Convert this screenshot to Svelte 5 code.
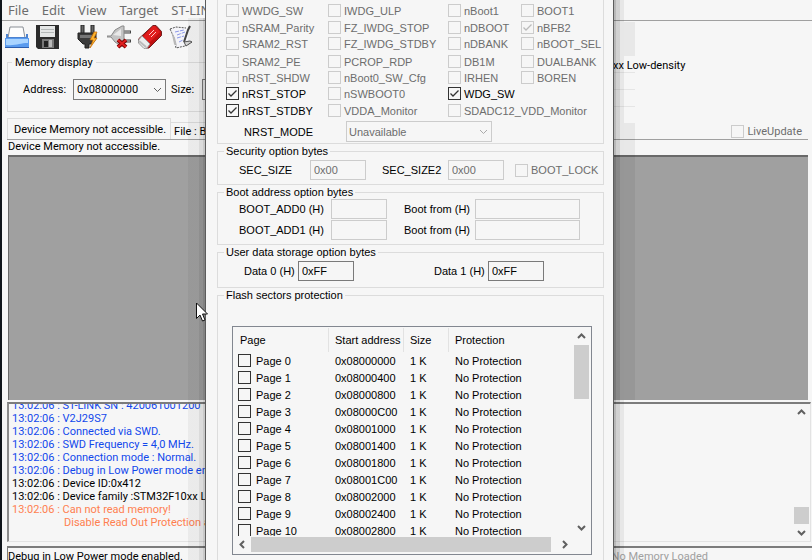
<script lang="ts">
  type Option = { name: string; col: number; row: number; checked?: boolean; enabled?: boolean };

  const menus = ['File', 'Edit', 'View', 'Target', 'ST-LINK'];

  const options: Option[] = [
    { name: 'WWDG_SW', col: 1, row: 1 },
    { name: 'IWDG_ULP', col: 2, row: 1 },
    { name: 'nBoot1', col: 3, row: 1 },
    { name: 'BOOT1', col: 4, row: 1 },
    { name: 'nSRAM_Parity', col: 1, row: 2 },
    { name: 'FZ_IWDG_STOP', col: 2, row: 2 },
    { name: 'nDBOOT', col: 3, row: 2 },
    { name: 'nBFB2', col: 4, row: 2, checked: true },
    { name: 'SRAM2_RST', col: 1, row: 3 },
    { name: 'FZ_IWDG_STDBY', col: 2, row: 3 },
    { name: 'nDBANK', col: 3, row: 3 },
    { name: 'nBOOT_SEL', col: 4, row: 3 },
    { name: 'SRAM2_PE', col: 1, row: 4 },
    { name: 'PCROP_RDP', col: 2, row: 4 },
    { name: 'DB1M', col: 3, row: 4 },
    { name: 'DUALBANK', col: 4, row: 4 },
    { name: 'nRST_SHDW', col: 1, row: 5 },
    { name: 'nBoot0_SW_Cfg', col: 2, row: 5 },
    { name: 'IRHEN', col: 3, row: 5 },
    { name: 'BOREN', col: 4, row: 5 },
    { name: 'nRST_STOP', col: 1, row: 6, checked: true, enabled: true },
    { name: 'nSWBOOT0', col: 2, row: 6 },
    { name: 'WDG_SW', col: 3, row: 6, checked: true, enabled: true },
    { name: 'nRST_STDBY', col: 1, row: 7, checked: true, enabled: true },
    { name: 'VDDA_Monitor', col: 2, row: 7 },
    { name: 'SDADC12_VDD_Monitor', col: 3, row: 7 },
  ];

  const bootRows = [0, 1];

  const pages = Array.from({ length: 11 }, (_, i) => ({
    name: `Page ${i}`,
    address: '0x' + (0x08000000 + i * 0x400).toString(16).toUpperCase().padStart(8, '0'),
  }));

  const log = [
    { text: 'ST-LINK SN : 420061001200', kind: 'info' },
    { text: 'V2J29S7', kind: 'info' },
    { text: 'Connected via SWD.', kind: 'info' },
    { text: 'SWD Frequency = 4,0 MHz.', kind: 'info' },
    { text: 'Connection mode : Normal.', kind: 'info' },
    { text: 'Debug in Low Power mode enabled.', kind: 'info' },
    { text: 'Device ID:0x412', kind: 'plain' },
    { text: 'Device family :STM32F10xx Low', kind: 'plain' },
    { text: 'Can not read memory!', kind: 'error' },
  ];
</script>

{#snippet chevron(dir: string)}
  <svg class="chevron {dir}" width="9" height="9" viewBox="0 0 9 9"><path d="M1 6 L4.5 2.5 L8 6" /></svg>
{/snippet}

<div class="screen">
  <main class="window">
    <nav class="menubar">
      {#each menus as menu}
        <button>{menu}</button>
      {/each}
    </nav>

    <div class="toolbar">
      <button aria-label="Open file">
        <svg width="24" height="24" viewBox="0 0 24 24">
          <path d="M5 2h13l2 11H3z" fill="#fdfdfd" stroke="#8a8f96" />
          <path d="M1 9h2v3h18V9h2v5H1z" fill="#4c82cf" />
          <path d="M0 13h24v10H0z" fill="#5a9bee" />
          <path d="M1 14h22v4c-8 0-12 3-22 2z" fill="#a9d4ff" />
          <path d="M0 22.500h24" stroke="#2a5cae" />
        </svg>
      </button>
      <button aria-label="Save file">
        <svg width="24" height="24" viewBox="0 0 24 24">
          <path d="M0 0h23v24H2l-2-2z" fill="#2b2b2b" />
          <path d="M4 1h15v11H4z" fill="#e4e6e6" />
          <path d="M5 4.500h13M5 7.500h13" stroke="#b4b8b8" />
          <path d="M6 14h12v9H6z" fill="#777" />
          <path d="M8 16h4v6H8z" fill="#222" />
          <path d="M13 15h3v7h-3z" fill="#b8b8b8" />
        </svg>
      </button>
      <button class="connect" aria-label="Connect">
        <svg width="24" height="24" viewBox="0 0 24 24">
          <path d="M5 0h3v9H5zM15 0h3v9h-3z" fill="#666" stroke="#222" />
          <path d="M2 8h18v6l-4 5h-3v4h-4v-4H7l-5-5z" fill="#3b3b3b" stroke="#222" />
          <path d="M4 10h12v3H4z" fill="#767676" />
          <path d="M18 7l-4 8h3l-3 8 7-10h-3l3-6z" fill="#ffb52e" stroke="#c76c05" stroke-width=".7" />
        </svg>
      </button>
      <button aria-label="Disconnect">
        <svg width="24" height="24" viewBox="0 0 24 24">
          <path d="M15 7h9M15 16h9" stroke="#444" stroke-width="3" />
          <path d="M15 7h8M15 16h8" stroke="#ddd" />
          <path d="M0 11h4l4-6 7-4h2v20h-3l-6-4-4-5H0z" fill="#c4c4c4" stroke="#888" />
          <path d="M6 10l8-6v7z" fill="#e8e8e8" />
          <path d="M11 15l8 7M19 15l-8 7" stroke="#7e0505" stroke-width="4" />
          <path d="M11 15l8 7M19 15l-8 7" stroke="#e02020" stroke-width="2" />
        </svg>
      </button>
      <button aria-label="Erase chip">
        <svg width="24" height="24" viewBox="0 0 24 24">
          <path d="M15 .5h3l5.500 6v4L11 23H8L.5 17v-3z" fill="#c01010" stroke="#702020" />
          <path d="M15 1h2l5 6L10 19l-6-6z" fill="#e01c1c" />
          <path d="M11 10l5-5M13 12l5-5" stroke="#ffc8c8" />
          <path d="M4 11l8 8-3 4-3 .5L.5 18v-3z" fill="#ececec" stroke="#999" />
          <path d="M1 16l7 6" stroke="#bbb" stroke-width="2" />
        </svg>
      </button>
      <button aria-label="Program and verify">
        <svg width="24" height="24" viewBox="0 0 24 24">
          <path d="M1 4l6-2 10 1 2 11 3 2-6 5-7 2-3-1-2-9z" fill="#f4f4f8" />
          <path d="M1 4l6-2 10 1M1 4l4 9 2 10 9-2 7-4" fill="none" stroke="#555" stroke-dasharray="2 1" />
          <path d="M6 7l9-2M8 10l8-3M8 13l7-2M10 17l4-2" stroke="#8c98e8" stroke-dasharray="4 1" />
          <path d="M2 5l4 8 2 8-3-2z" fill="#b8b8b8" />
          <path d="M21 1l-2 4-4 12" stroke="#444" stroke-width="2" fill="none" />
          <path d="M15 17l6-1 2 1-6 4z" fill="#d5d5d5" stroke="#555" />
        </svg>
      </button>
    </div>

    <div class="top-row">
      <fieldset class="memory-display">
        <legend>Memory display</legend>
        <label for="address">Address:</label>
        <span class="combo">
          <select id="address"><option>0x08000000</option></select>
          {@render chevron('down')}
        </span>
        <label for="size">Size:</label>
        <input id="size" type="text" />
      </fieldset>
      <p class="device">xx Low-density</p>
    </div>

    <div class="tabs">
      <button class="tab active">Device Memory not accessible.</button>
      <button class="tab">File : Blank</button>
      <label class="live"><input type="checkbox" disabled />LiveUpdate</label>
    </div>
    <p class="note">Device Memory not accessible.</p>
    <div class="memory"></div>

    <div class="log">
      <div class="lines">
        {#each log as line}
          <p class={line.kind}>13:02:06 : {line.text}</p>
        {/each}
        <p class="error more">Disable Read Out Protection and retry.</p>
      </div>
      <div class="scroll log-scroll">
        <button aria-label="Scroll log up">{@render chevron('up')}</button>
        <div class="thumb"></div>
        <button aria-label="Scroll log down">{@render chevron('down')}</button>
      </div>
    </div>

    <footer>
      <span>Debug in Low Power mode enabled.</span>
      <span class="loaded">No Memory Loaded</span>
    </footer>
  </main>

  <div class="shade left"></div>
  <div class="shade right"></div>
  <div class="shade ghost"></div>
  <div class="shade upper"></div>
  <div class="shade lower"></div>

  <div class="dialog" role="dialog" aria-label="Option Bytes">
    <fieldset class="user-config">
      <div class="options">
        {#each options as option}
          <label
            class:enabled={option.enabled}
            style="grid-area: {option.row} / {option.col}"
          >
            <input type="checkbox" checked={option.checked} disabled={!option.enabled} />{option.name}
          </label>
        {/each}
      </div>
      <div class="mode">
        <label for="mode">NRST_MODE</label>
        <span class="combo off">
          <select id="mode" disabled><option>Unavailable</option></select>
          {@render chevron('down')}
        </span>
      </div>
    </fieldset>

    <fieldset class="security">
      <legend>Security option bytes</legend>
      <label for="sec1">SEC_SIZE</label>
      <input id="sec1" type="text" value="0x00" disabled />
      <label for="sec2">SEC_SIZE2</label>
      <input id="sec2" type="text" value="0x00" disabled />
      <label class="lock"><input type="checkbox" disabled />BOOT_LOCK</label>
    </fieldset>

    <fieldset class="boot">
      <legend>Boot address option bytes</legend>
      {#each bootRows as n}
        <label for="boot{n}">BOOT_ADD{n} (H)</label>
        <input id="boot{n}" type="text" disabled />
        <label for="from{n}">Boot from (H)</label>
        <input id="from{n}" type="text" disabled />
      {/each}
    </fieldset>

    <fieldset class="user-data">
      <legend>User data storage option bytes</legend>
      <label for="data0">Data 0 (H)</label>
      <input id="data0" type="text" value="0xFF" />
      <label for="data1">Data 1 (H)</label>
      <input id="data1" type="text" value="0xFF" />
    </fieldset>

    <fieldset class="flash">
      <legend>Flash sectors protection</legend>
      <div class="list">
        <div class="view">
          <table>
            <thead>
              <tr><th class="page">Page</th><th class="start">Start address</th><th class="size">Size</th><th>Protection</th></tr>
            </thead>
            <tbody>
              {#each pages as page}
                <tr>
                  <td><label><input type="checkbox" />{page.name}</label></td>
                  <td>{page.address}</td>
                  <td>1 K</td>
                  <td>No Protection</td>
                </tr>
              {/each}
            </tbody>
          </table>
        </div>
        <div class="scroll list-scroll">
          <button aria-label="Scroll up">{@render chevron('up')}</button>
          <div class="thumb"></div>
          <button aria-label="Scroll down">{@render chevron('down')}</button>
        </div>
        <div class="hscroll">
          <button aria-label="Scroll left">{@render chevron('prev')}</button>
          <div class="thumb"></div>
          <button aria-label="Scroll right">{@render chevron('next')}</button>
        </div>
      </div>
    </fieldset>
  </div>

  <svg class="cursor" width="12" height="20" viewBox="0 0 12 20">
    <path d="M.5 1v15.500l3.500-3.500 2.500 6 2.500-1-2.500-6h5z" fill="#fff" stroke="#111" />
  </svg>
</div>

<style>
  :global(body) {
    margin: 0;
    background: #f6f6f6;
  }

  .screen {
    position: relative;
    height: 100vh;
    overflow: hidden;
    box-sizing: border-box;
    font: 11px/13px Roboto, sans-serif;
    color: #000;
    white-space: nowrap;
  }

  .screen :is(p, fieldset, legend, button, input, select) {
    margin: 0;
    padding: 0;
    border: 0;
    border-radius: 0;
    font: inherit;
    color: inherit;
    background: none;
    min-width: 0;
    box-sizing: border-box;
  }

  .window {
    display: flex;
    flex-direction: column;
    height: 100%;
    box-sizing: border-box;
    border-left: 2px solid #10151b;
    background: #f6f6f6;
  }

  .menubar {
    display: flex;
    gap: 13px;
    height: 20px;
    padding-left: 6px;
    border-bottom: 1px solid #a0a0a0;
    font: 13px/18px "Noto Sans", sans-serif;
  }

  .menubar button {
    color: #6d6d6d;
  }

  .toolbar {
    display: flex;
    gap: 7px;
    height: 32px;
    padding: 4px 0 0 3px;
    box-sizing: border-box;
  }

  .toolbar button {
    width: 24px;
    height: 24px;
  }

  .toolbar .connect {
    margin-left: 9px;
  }

  .toolbar svg {
    display: block;
  }

  .top-row {
    display: flex;
    padding: 3px 3px 6px 5px;
  }

  .screen fieldset {
    border: 1px solid #dcdcdc;
  }

  .screen .memory-display {
    display: grid;
    grid-template-columns: 50px 98px 31px 60px;
    align-items: center;
    flex: none;
    width: 570px;
    height: 56px;
    padding: 0 0 2px 15px;
  }

  .screen .memory-display legend {
    margin-left: -11px;
    padding: 0 3px;
  }

  .combo {
    position: relative;
    display: inline-block;
    width: 93px;
    height: 21px;
  }

  .screen .combo select {
    appearance: none;
    width: 100%;
    height: 100%;
    padding-left: 3px;
    border: 1px solid #7a7a7a;
    opacity: 1;
  }

  .combo .chevron {
    position: absolute;
    right: 4px;
    top: 6px;
  }

  .screen .memory-display input {
    height: 21px;
    border: 1px solid #7a7a7a;
  }

  .screen .device {
    padding: 3px 0 0 36px;
  }

  .tabs {
    display: flex;
    align-items: flex-end;
    height: 21px;
    margin: 0 4px 0 5px;
    border-bottom: 1px solid #a0a0a0;
  }

  .screen .tab {
    height: 17px;
    padding: 0 3px;
    border-top: 1px solid #dcdcdc;
  }

  .screen .tab.active {
    height: 21px;
    padding: 0 4px 0 6px;
    border: 1px solid #dcdcdc;
    border-bottom: 0;
  }

  .live {
    display: flex;
    align-items: center;
    gap: 3px;
    margin: 0 6px 1px auto;
    color: #6d6d6d;
  }

  .screen input[type='checkbox'] {
    appearance: none;
    flex: none;
    width: 13px;
    height: 13px;
    border: 1px solid #333;
  }

  .screen input[type='checkbox']:disabled {
    border-color: #ccc;
  }

  .screen input[type='checkbox']:checked {
    background: url("data:image/svg+xml,%3Csvg xmlns='http://www.w3.org/2000/svg' viewBox='0 0 11 11'%3E%3Cpath d='M1.500 5.500 L4 8 L9.500 2.500' fill='none' stroke='%23333' stroke-width='1.300'/%3E%3C/svg%3E");
  }

  .screen input[type='checkbox']:checked:disabled {
    background: url("data:image/svg+xml,%3Csvg xmlns='http://www.w3.org/2000/svg' viewBox='0 0 11 11'%3E%3Cpath d='M1.500 5.500 L4 8 L9.500 2.500' fill='none' stroke='%23bbb' stroke-width='1.300'/%3E%3C/svg%3E");
  }

  .screen .note {
    height: 15px;
    margin-left: 6px;
  }

  .memory {
    flex: 1;
    margin: 0 4px 2px 6px;
    border: 1px solid #696969;
    border-width: 2px 0 0 1px;
    background: #a0a0a0;
  }

  .log {
    display: flex;
    height: 140px;
    margin: 0 1px 4px 5px;
    box-sizing: border-box;
    border: 1px solid #e3e3e3;
    border-top: 2px solid #7c7c7c;
    border-left: 2px solid #8c8c8c;
  }

  .lines {
    flex: 1;
    padding-left: 3px;
    overflow: hidden;
  }

  .screen .lines p:first-child {
    margin-top: -5px;
  }

  .screen .info {
    color: #1248ec;
  }

  .screen .error {
    color: #ff7f50;
  }

  .screen .more {
    padding-left: 52px;
  }

  .scroll {
    display: flex;
    flex-direction: column;
    align-items: center;
    width: 17px;
  }

  .scroll button,
  .hscroll button {
    display: flex;
    align-items: center;
    justify-content: center;
    width: 17px;
    height: 17px;
  }

  .scroll .thumb {
    width: 15px;
    background: #cdcdcd;
  }

  .log-scroll .thumb {
    height: 17px;
    margin-top: auto;
  }

  .chevron {
    fill: none;
    stroke: #606060;
    stroke-width: 2;
    pointer-events: none;
  }

  .combo .chevron {
    stroke-width: 1;
  }

  .off .chevron {
    stroke: #aaa;
  }

  .down {
    transform: rotate(180deg);
  }

  .prev {
    transform: rotate(-90deg);
  }

  .next {
    transform: rotate(90deg);
  }

  footer {
    display: flex;
    height: 14px;
    margin-left: 5px;
    box-sizing: border-box;
    border-top: 2px solid #7c7c7c;
    border-left: 1px solid #7c7c7c;
    line-height: 18px;
    overflow: hidden;
  }

  .loaded {
    margin-left: auto;
    padding-right: 104px;
    color: #a0a0a0;
  }

  .shade {
    position: absolute;
    pointer-events: none;
  }

  .left {
    top: 18px;
    bottom: 0;
    left: 188px;
    width: 17px;
    background: linear-gradient(90deg, #0000000c 0 11px, #0000001c 11px 15px, #00000030 15px);
  }

  .right {
    top: 0;
    bottom: 0;
    left: 614px;
    width: 10px;
    background: linear-gradient(90deg, #00000040 0 2px, #00000026 2px 6px, #00000010 6px);
  }

  .ghost {
    top: 56px;
    left: 614px;
    width: 21px;
    height: 67px;
    background: repeating-linear-gradient(transparent 0 16px, #00000012 16px 17px);
  }

  .upper,
  .lower {
    left: 624px;
    width: 11px;
    background: #0000000e;
  }

  .upper {
    top: 22px;
    height: 34px;
  }

  .lower {
    top: 123px;
    bottom: 160px;
  }

  .dialog {
    position: absolute;
    top: 0;
    bottom: 0;
    left: 205px;
    width: 409px;
    padding: 0 9px 0 11px;
    box-sizing: border-box;
    overflow: hidden;
    border: 1px solid #5c5c5c;
    border-width: 0 1px;
    background: #f6f6f6;
    font: 11px/14px "Liberation Sans", sans-serif;
  }

  .screen .dialog legend {
    margin-left: -15px;
    padding: 0 2px;
  }

  .dialog label {
    display: flex;
    align-items: center;
    gap: 3px;
  }

  .screen .dialog input[type='text'] {
    width: 56px;
    height: 20px;
    padding: 0 3px;
    border: 1px solid #7a7a7a;
  }

  .screen .dialog input[type='text']:disabled {
    border-color: #ccc;
    color: #6d6d6d;
  }

  .screen .user-config {
    padding: 4px 0 1px 8px;
    border-top: 0;
  }

  .options {
    display: grid;
    grid-template-columns: 102px 120px 73px 1fr;
    grid-template-rows: 17px 16px 18px 16px 16px 17px 13px;
    color: #6d6d6d;
  }

  .options label {
    height: 13px;
  }

  .options .enabled {
    color: #000;
  }

  .mode {
    display: flex;
    align-items: center;
    margin-top: 4px;
    padding-left: 18px;
  }

  .mode label {
    width: 102px;
  }

  .mode .combo {
    width: 146px;
  }

  .screen .mode select {
    padding-left: 2px;
    border-color: #ccc;
    color: #6d6d6d;
  }

  .screen .security,
  .screen .user-data {
    display: grid;
    align-items: center;
    padding: 2px 0 4px 21px;
  }

  .screen .security {
    grid-template-columns: 71px 72px 66px 67px 1fr;
  }

  .lock {
    color: #6d6d6d;
  }

  .screen .boot {
    display: grid;
    grid-template-columns: 92px 73px 71px 1fr;
    align-items: center;
    row-gap: 1px;
    padding: 0 23px 4px 21px;
  }

  .screen .dialog .boot input:nth-of-type(even) {
    width: 100%;
  }

  .screen .user-data {
    grid-template-columns: 54px 136px 54px 1fr;
    padding: 2px 0 6px 26px;
  }

  .screen .user-data legend {
    margin-left: -20px;
  }

  .screen .flash {
    padding: 24px 11px 14px 14px;
  }

  .screen .flash legend {
    margin-left: -8px;
  }

  .list {
    display: grid;
    grid-template-columns: 1fr 17px;
    padding: 1px;
    border: 1px solid #828790;
  }

  .view {
    height: 208px;
    overflow: hidden;
  }

  table {
    width: 100%;
    table-layout: fixed;
    border-collapse: collapse;
  }

  th,
  td {
    height: 17px;
    padding: 0 0 0 6px;
    font-weight: normal;
    text-align: left;
    box-sizing: border-box;
  }

  th {
    height: 24px;
  }

  .page {
    width: 95px;
  }

  .start {
    width: 75px;
  }

  .size {
    width: 45px;
  }

  .page,
  .start,
  .size {
    background: linear-gradient(#e2e2e2, #e2e2e2) right / 1px 100% no-repeat;
  }

  td:first-child {
    padding-left: 4px;
  }

  .dialog td label {
    gap: 5px;
  }

  .list-scroll .thumb {
    height: 54px;
    margin-bottom: auto;
  }

  .hscroll {
    display: flex;
    grid-column: 1 / -1;
    height: 17px;
    padding-right: 17px;
  }

  .hscroll .thumb {
    flex: 1;
    margin: 1px 5px 1px 0;
    background: #cdcdcd;
  }

  .cursor {
    position: absolute;
    top: 302px;
    left: 196px;
  }
</style>
